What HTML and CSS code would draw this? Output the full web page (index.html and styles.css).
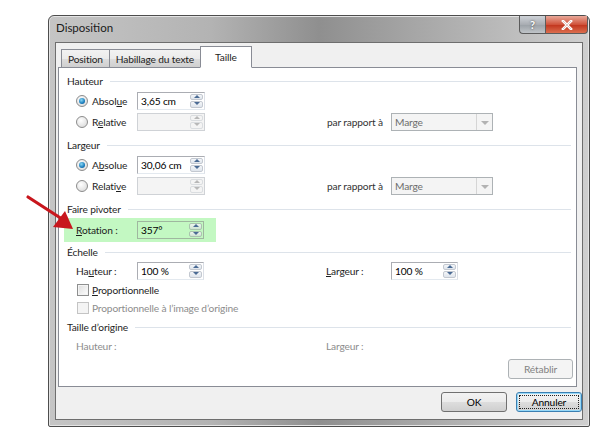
FILE: index.html
```html
<!DOCTYPE html>
<html lang="fr">
<head>
<meta charset="utf-8">
<title>Disposition</title>
<link rel="stylesheet" href="styles.css">
</head>
<body>
<div class="window">
  <div class="titlebar">
    <span class="title">Disposition</span>
    <div class="caption-btns">
      <span class="cbtn help">?</span>
      <span class="cbtn close">
        <svg width="12" height="10" viewBox="0 0 12 10"><path d="M2 1 L10 9 M10 1 L2 9" stroke="#fff" stroke-width="2.6" stroke-linecap="square"/><path d="M2 1 L10 9 M10 1 L2 9" stroke="#7a2a1a" stroke-width="0.6" opacity="0.4"/></svg>
      </span>
    </div>
  </div>
  <div class="client">
    <div class="tabs">
      <span class="tab">Position</span>
      <span class="tab">Habillage du texte</span>
      <span class="tab active">Taille</span>
    </div>
    <div class="panel">
      <div class="group">Hauteur</div>
      <div class="row">
        <span class="radio checked"></span><span class="rlabel">Absol<u>u</u>e</span>
        <span class="spin"><span class="field">3,65 cm</span><span class="arrows"><i class="up"></i><i class="down"></i></span></span>
      </div>
      <div class="row">
        <span class="radio"></span><span class="rlabel">R<u>e</u>lative</span>
        <span class="spin disabled"><span class="field"></span><span class="arrows"><i class="up"></i><i class="down"></i></span></span>
        <span class="rel">par rapport à</span>
        <span class="select"><span class="sval">Marge</span><span class="sbtn"><i></i></span></span>
      </div>
      <div class="group">Largeur</div>
      <div class="row">
        <span class="radio checked"></span><span class="rlabel">A<u>b</u>solue</span>
        <span class="spin"><span class="field">30,06 cm</span><span class="arrows"><i class="up"></i><i class="down"></i></span></span>
      </div>
      <div class="row">
        <span class="radio"></span><span class="rlabel">Relati<u>v</u>e</span>
        <span class="spin disabled"><span class="field"></span><span class="arrows"><i class="up"></i><i class="down"></i></span></span>
        <span class="rel">par rapport à</span>
        <span class="select"><span class="sval">Marge</span><span class="sbtn"><i></i></span></span>
      </div>
      <div class="group pivot">Faire pivoter</div>
      <div class="highlight">
        <span class="lbl"><u>R</u>otation :</span>
        <span class="spin narrow"><span class="field">357°</span><span class="arrows"><i class="up"></i><i class="down"></i></span></span>
      </div>
      <div class="group">Échelle</div>
      <div class="row scale">
        <span class="lbl">Ha<u>u</u>teur :</span>
        <span class="spin narrow"><span class="field">100 %</span><span class="arrows"><i class="up"></i><i class="down"></i></span></span>
        <span class="lbl2"><u>L</u>argeur :</span>
        <span class="spin narrow"><span class="field">100 %</span><span class="arrows"><i class="up"></i><i class="down"></i></span></span>
      </div>
      <div class="crow">
        <span class="check"></span><span><u>P</u>roportionnelle</span>
      </div>
      <div class="crow dis">
        <span class="check"></span><span>Proportionnelle à l’image d’origine</span>
      </div>
      <div class="group">Taille d’origine</div>
      <div class="row orig">
        <span class="lbl">Hauteur :</span>
        <span class="lbl2">Largeur :</span>
      </div>
      <div class="reset-row"><span class="btn disabled-btn">Rétablir</span></div>
    </div>
    <div class="footer">
      <span class="btn">OK</span>
      <span class="btn focus"><span class="focusring">Annuler</span></span>
    </div>
  </div>
</div>
<svg class="arrow" width="60" height="45" viewBox="0 0 60 45">
  <line x1="4" y1="4" x2="38" y2="26" stroke="#c8161d" stroke-width="3.2" stroke-linecap="round"/>
  <polygon points="49,36 29,34 41,18" fill="#c8161d"/>
</svg>
</body>
</html>
```
FILE: styles.css
```css
* { box-sizing: border-box; }
html, body { margin: 0; padding: 0; background: #fff; }
body {
  font-family: "Lato", "Open Sans", sans-serif;
  font-size: 10.2px;
  letter-spacing: -0.15px;
  color: #1e1e1e;
  width: 599px;
  height: 437px;
  position: relative;
  overflow: hidden;
  padding: 15px 0 0 48px;
}
u { text-decoration: underline; text-underline-offset: 1px; }

.window {
  width: 542px;
  height: 412px;
  border: 1px solid #4d4d4d;
  border-radius: 6px 6px 2px 2px;
  background: linear-gradient(90deg, #c5c5c5 0%, #b3b3b3 30%, #8f8f8f 50%, #a9a9a9 70%, #cfcfcf 100%);
  padding: 0 6px 6px 6px;
  display: flex;
  flex-direction: column;
  box-shadow: inset 0 0 0 1px #e4e4e4;
}
.titlebar {
  height: 26px;
  display: flex;
  align-items: flex-start;
  justify-content: space-between;
}
.title {
  font-size: 11.5px;
  letter-spacing: 0;
  color: #1a1a1a;
  padding: 5px 0 0 1px;
}
.caption-btns { display: flex; margin-right: -5px; }
.cbtn {
  height: 18px;
  border: 1px solid #5c5c5c;
  border-top: none;
  display: flex; align-items: center; justify-content: center;
}
.help {
  width: 26px;
  border-radius: 0 0 0 4px;
  background: linear-gradient(#cfd3d8, #a9adb3 50%, #9aa0a6 51%, #c0c4c8);
  color: #fff; font-weight: bold; font-size: 11px;
  text-shadow: 0 0 2px #333;
  border-right: none;
}
.close {
  width: 43px;
  border-radius: 0 0 4px 0;
  background: linear-gradient(#e9a99a, #d0533b 50%, #c0331c 51%, #dc6e4e);
}

.client {
  flex: 1;
  background: #f0f0f0;
  border: 1px solid #6e6e6e;
  padding: 3px 5px 0 2px;
  display: flex;
  flex-direction: column;
}
.tabs {
  display: flex;
  height: 21px;
  align-items: flex-end;
  padding-left: 3px;
  position: relative;
  z-index: 1;
}
.tab {
  height: 18px;
  padding: 0 6px;
  border: 1px solid #898c95;
  border-bottom: none;
  margin-right: -1px;
  background: linear-gradient(#f2f2f2, #ebebeb 50%, #dddddd 51%, #cfcfcf);
  display: flex; align-items: center;
}
.tab.active {
  height: 22px;
  background: #fff;
  padding: 0 14px;
  margin-bottom: -1px;
  border-bottom: 1px solid #fff;
}
.panel {
  height: 320px;
  background: #fff;
  border: 1px solid #898c95;
  padding: 5px 3px 0 0;
  display: flex;
  flex-direction: column;
}
.group {
  height: 16px;
  display: flex;
  align-items: center;
  padding-left: 8px;
  color: #1e1e1e;
}
.group::after {
  content: "";
  flex: 1;
  height: 1px;
  background: #dde3ea;
  margin-left: 7px;
  margin-right: 2px;
}
.row {
  height: 21px;
  display: flex;
  align-items: center;
  padding-left: 17px;
}
.group + .row { margin-top: 1px; }
.row + .group { margin-top: 5px; }
.row + .group.pivot { margin-top: 5px; }
.radio {
  width: 12px; height: 12px;
  border-radius: 50%;
  border: 1px solid #8c8c8c;
  background: radial-gradient(circle at 40% 35%, #fff, #e1e1e1 70%);
  position: relative;
  flex: none;
}
.radio.checked::after {
  content: "";
  position: absolute;
  left: 2px; top: 2px;
  width: 6px; height: 6px;
  border-radius: 50%;
  background: radial-gradient(circle at 40% 35%, #8ad8f5, #1a7dbd 60%, #0d4f84);
}
.rlabel { width: 45px; margin-left: 4px; }
.spin {
  display: flex;
  width: 68px;
  height: 18px;
  border: 1px solid #abadb3;
  border-right-color: #dbdfe6;
  border-bottom-color: #e3e9ef;
  background: #fff;
  flex: none;
}
.spin.narrow { width: 67px; }
.field { flex: 1; padding-left: 3px; display: flex; align-items: center; color: #000; }
.arrows {
  width: 14px;
  display: flex; flex-direction: column;
  padding: 1px 1px 1px 0;
  gap: 1px;
}
.arrows i {
  flex: 1;
  border: 1px solid #c3c8d0;
  border-radius: 2px;
  background: linear-gradient(#f4f6f9, #dfe5ec);
  position: relative;
}
.arrows i::after {
  content: "";
  position: absolute;
  left: 50%; top: 50%;
  margin-left: -3px; margin-top: -2px;
  border-left: 3px solid transparent;
  border-right: 3px solid transparent;
}
.arrows .up::after { border-bottom: 3px solid #4b6b94; }
.arrows .down::after { border-top: 3px solid #4b6b94; }
.spin.disabled { background: #f4f4f4; border-color: #cfd2d6; }
.spin.disabled .arrows i { border-color: #dadde0; background: #f4f4f4; }
.spin.disabled .arrows .up::after { border-bottom-color: #b8b8b8; }
.spin.disabled .arrows .down::after { border-top-color: #b8b8b8; }

.rel { margin-left: 122px; width: 64px; color: #333; }
.select {
  width: 102px;
  height: 18px;
  border: 1px solid #adb2b5;
  background: #f4f4f4;
  display: flex;
}
.sval { flex: 1; padding-left: 3px; display: flex; align-items: center; color: #6d6d6d; }
.sbtn {
  width: 16px;
  border-left: 1px solid #d5d5d5;
  position: relative;
}
.sbtn i {
  position: absolute;
  left: 4px; top: 7px;
  border-left: 4px solid transparent;
  border-right: 4px solid transparent;
  border-top: 4px solid #b2b2b2;
}

.highlight {
  margin: 1px 0 0 5px;
  width: 152px;
  height: 24px;
  background: #c3f8c2;
  display: flex;
  align-items: center;
  padding-left: 12px;
}
.lbl { width: 61px; flex: none; }
.highlight .spin { border-color: #9fb79f; background: #c3f8c2; }
.highlight .arrows i { background: linear-gradient(#eef6ee, #cfe3d3); border-color: #a9c4ae; }
.highlight + .group { margin-top: 2px; }
.group + .row.scale { margin-top: 0; }
.lbl2 { margin-left: 122px; width: 65px; flex: none; }
.crow {
  height: 18px;
  display: flex;
  align-items: center;
  padding-left: 18px;
  gap: 3px;
}
.check {
  width: 12px; height: 12px;
  border: 1px solid #8e8f8f;
  background: linear-gradient(135deg, #dcdcdc, #fff);
  box-shadow: inset 0 0 0 1px #f4f4f4;
}
.crow.dis { color: #8d8d8d; }
.crow.dis .check { border-color: #c4c4c4; background: #f4f4f4; }
.crow + .group { margin-top: 2px; }
.group + .row.orig { color: #8d8d8d; margin-top: 0; }
.row.orig .lbl2 { margin-left: 189px; }
.reset-row { display: flex; justify-content: flex-end; margin-top: 3px; }
.btn {
  width: 66px;
  height: 20px;
  border: 1px solid #707070;
  border-radius: 3px;
  background: linear-gradient(#f2f2f2, #ebebeb 50%, #dddddd 51%, #cfcfcf);
  display: flex; align-items: center; justify-content: center;
  color: #000;
}
.disabled-btn {
  width: 65px;
  border-color: #adb2b5;
  background: #f4f4f4;
  color: #838383;
}
.footer {
  display: flex;
  justify-content: flex-end;
  gap: 9px;
  margin-top: 5px;
  margin-right: -5px;
}
.btn.focus {
  border-color: #3c7fb1;
  box-shadow: inset 0 0 0 1px #96d9f9;
  padding: 2px;
}
.focusring {
  width: 100%; height: 100%;
  border: 1px dotted #222;
  display: flex; align-items: center; justify-content: center;
}
.arrow {
  position: absolute;
  left: 24px;
  top: 193px;
}
```
